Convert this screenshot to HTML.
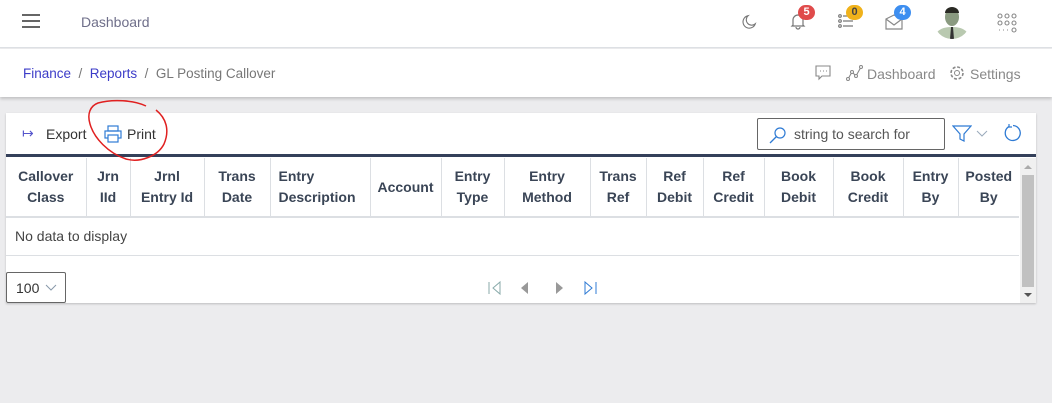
<!DOCTYPE html>
<html><head><meta charset="utf-8"><style>
*{box-sizing:border-box;margin:0;padding:0}
body{width:1052px;height:403px;background:#ececee;font-family:"Liberation Sans",sans-serif;position:relative;overflow:hidden;color:#333}
.a{position:absolute}
.top{left:0;top:0;width:1052px;height:48px;background:#fff;border-bottom:1px solid #dde0e4}
.bc{left:0;top:49px;width:1052px;height:48px;background:#fff;box-shadow:0 2px 3px rgba(0,0,0,.18)}
.card{left:6px;top:113px;width:1030px;height:190px;background:#fff;box-shadow:0 1px 2px rgba(0,0,0,.2)}
.badge{position:absolute;height:15px;min-width:17px;border-radius:8px;color:#fff;font-size:11px;font-weight:bold;text-align:center;line-height:15px}
th{font-size:14px;font-weight:bold;color:#3a4556;border-right:1px solid #dcdfe3;text-align:center;line-height:21px;vertical-align:middle;white-space:nowrap}
table{border-collapse:collapse;table-layout:fixed}
</style></head><body>
<div class="a top">
 <div class="a" style="left:22px;top:14px;width:18px;height:2px;background:#666;box-shadow:0 6px 0 #666,0 12px 0 #666"></div>
 <div class="a" style="left:81px;top:14px;font-size:14px;color:#6f6f8a">Dashboard</div>
 <svg class="a" style="left:740px;top:13px" width="18" height="18" viewBox="0 0 20 20"><path d="M9 3a7 7 0 1 0 8 9 6 6 0 0 1-8-9z" fill="none" stroke="#777" stroke-width="1.2"/></svg>
 <svg class="a" style="left:789px;top:12px" width="18" height="18" viewBox="0 0 18 18"><path d="M4 13V8a5 5 0 0 1 10 0v5l1 1H3zM7 15a2 2 0 0 0 4 0" fill="none" stroke="#777" stroke-width="1.2"/></svg>
 <div class="badge" style="left:798px;top:5px;background:#e04b4b">5</div>
 <svg class="a" style="left:838px;top:13px" width="16" height="16" viewBox="0 0 16 16"><g fill="none" stroke="#777" stroke-width="1.2"><circle cx="2" cy="3" r="1.3"/><circle cx="2" cy="8" r="1.3"/><circle cx="2" cy="13" r="1.3"/><path d="M5 3h10M5 8h10M5 13h10"/></g></svg>
 <div class="badge" style="left:846px;top:5px;background:#f0b21b;color:#444">0</div>
 <svg class="a" style="left:885px;top:14px" width="18" height="16" viewBox="0 0 18 16"><path d="M1 5l8-4 8 4v10H1zM1 5l8 6 8-6" fill="none" stroke="#888" stroke-width="1.2"/></svg>
 <div class="badge" style="left:894px;top:5px;background:#3d8ef0">4</div>
 <svg class="a" style="left:934px;top:3px" width="36" height="36" viewBox="0 0 36 36"><defs><clipPath id="c"><circle cx="18" cy="18" r="18"/></clipPath></defs><g clip-path="url(#c)"><rect width="36" height="36" fill="#fff"/><path d="M0 36C2 26 10 24 18 24S34 26 36 36z" fill="#b9c9b0"/><ellipse cx="18" cy="14" rx="7" ry="9" fill="#8a9a80"/><path d="M11 10a7 6 0 0 1 14 0z" fill="#2a2a24"/><path d="M17 24h2l1 12h-4z" fill="#333"/></g></svg>
 <svg class="a" style="left:997px;top:13px" width="20" height="20" viewBox="0 0 20 20"><g fill="none" stroke="#888" stroke-width="1.1"><circle cx="3" cy="3" r="2"/><circle cx="10" cy="3" r="2"/><circle cx="17" cy="3" r="2"/><circle cx="3" cy="10" r="2"/><circle cx="10" cy="10" r="2"/><circle cx="17" cy="10" r="2"/><circle cx="17" cy="17" r="2"/></g><path d="M2 17h1M6 17h1M10 17h1" stroke="#888"/></svg>
</div>
<div class="a bc">
 <div class="a" style="left:23px;top:17px;font-size:13.5px;color:#777"><span style="color:#3c3cc8">Finance</span> &nbsp;/&nbsp; <span style="color:#3c3cc8">Reports</span> &nbsp;/&nbsp; GL Posting Callover</div>
 <svg class="a" style="left:815px;top:16px" width="16" height="16" viewBox="0 0 16 16"><path d="M1 1h14v10H7l-3 3v-3H1z" fill="none" stroke="#888" stroke-width="1.1"/><path d="M5 6h1M8 6h1M11 6h1" stroke="#888"/></svg>
 <svg class="a" style="left:846px;top:16px" width="17" height="16" viewBox="0 0 17 16"><path d="M2 14l4-7 4 4 5-9" fill="none" stroke="#888" stroke-width="1.1"/><circle cx="2" cy="14" r="1.5" fill="#fff" stroke="#888"/><circle cx="6" cy="7" r="1.5" fill="#fff" stroke="#888"/><circle cx="10" cy="11" r="1.5" fill="#fff" stroke="#888"/><circle cx="15" cy="2" r="1.5" fill="#fff" stroke="#888"/></svg>
 <div class="a" style="left:867px;top:17px;font-size:14px;color:#888">Dashboard</div>
 <svg class="a" style="left:949px;top:16px" width="16" height="16" viewBox="0 0 16 16"><circle cx="8" cy="8" r="2.5" fill="none" stroke="#888"/><circle cx="8" cy="8" r="6" fill="none" stroke="#888" stroke-width="1.6" stroke-dasharray="3 1.7"/></svg>
 <div class="a" style="left:970px;top:17px;font-size:14px;color:#888">Settings</div>
</div>
<div class="a card">
 <div class="a" style="left:16px;top:12px;font-size:14px;color:#5555cc">&#x21A6;</div>
 <div class="a" style="left:40px;top:13px;font-size:14px;color:#333">Export</div>
 <svg class="a" style="left:98px;top:12px" width="18" height="18" viewBox="0 0 18 18"><g fill="none" stroke="#2f7bd4" stroke-width="1.2"><rect x="4" y="1" width="10" height="5"/><rect x="1" y="6" width="16" height="7"/><rect x="4" y="10" width="10" height="7" fill="#fff"/></g></svg>
 <div class="a" style="left:121px;top:13px;font-size:14px;color:#333">Print</div>
 <div class="a" style="left:751px;top:5px;width:188px;height:32px;border:1px solid #666;border-radius:2px"></div>
 <svg class="a" style="left:763px;top:13px" width="18" height="18" viewBox="0 0 18 18"><circle cx="11" cy="7" r="5" fill="none" stroke="#2f7bd4" stroke-width="1.2"/><path d="M7.5 10.5L1 17" stroke="#2f7bd4" stroke-width="1.3"/></svg>
 <div class="a" style="left:788px;top:13px;font-size:14px;color:#555">string to search for</div>
 <svg class="a" style="left:946px;top:12px" width="20" height="18" viewBox="0 0 20 18"><path d="M1 1h18l-7 8v7l-4-2V9z" fill="none" stroke="#2f7bd4" stroke-width="1.2"/></svg>
 <svg class="a" style="left:970px;top:17px" width="12" height="8" viewBox="0 0 12 8"><path d="M1 1l5 5 5-5" fill="none" stroke="#9aaabb"/></svg>
 <svg class="a" style="left:997px;top:10px" width="20" height="20" viewBox="0 0 20 20"><path d="M6 3.5A7.5 7.5 0 1 0 10 2.5" fill="none" stroke="#2f7bd4" stroke-width="1.3"/><path d="M6 1v3h3" fill="none" stroke="#2f7bd4" stroke-width="1.2"/></svg>
 <div class="a" style="left:0;top:41px;width:1030px;height:3px;background:#34405a"></div>
 <table class="a" style="left:0;top:45px;width:1013px">
  <colgroup><col style="width:80px"><col style="width:44px"><col style="width:74px"><col style="width:66px"><col style="width:100px"><col style="width:71px"><col style="width:63px"><col style="width:86px"><col style="width:56px"><col style="width:57px"><col style="width:61px"><col style="width:69px"><col style="width:70px"><col style="width:55px"><col style="width:61px"></colgroup>
  <tr style="height:59px;border-bottom:2px solid #dcdfe3"><th>Callover<br>Class</th><th>Jrn<br>IId</th><th>Jrnl<br>Entry Id</th><th>Trans<br>Date</th><th style="text-align:left;padding-left:8px">Entry<br>Description</th><th>Account</th><th>Entry<br>Type</th><th>Entry<br>Method</th><th>Trans<br>Ref</th><th>Ref<br>Debit</th><th>Ref<br>Credit</th><th>Book<br>Debit</th><th>Book<br>Credit</th><th>Entry<br>By</th><th style="border-right:none">Posted<br>By</th></tr>
  <tr style="height:38px;border-bottom:1px solid #dcdfe3"><td colspan="15" style="font-size:14px;color:#444;padding-left:9px">No data to display</td></tr>
 </table>
 <div class="a" style="left:1014px;top:45px;width:16px;height:145px;background:#f0f0f0"></div>
 <div class="a" style="left:1016px;top:62px;width:12px;height:112px;background:#c1c1c1"></div>
 <div class="a" style="left:1018px;top:52px;border:4px solid transparent;border-bottom:4px solid #aaa;border-top:none"></div>
 <div class="a" style="left:1018px;top:180px;border:4px solid transparent;border-top:4px solid #555;border-bottom:none"></div>
 <div class="a" style="left:0;top:159px;width:60px;height:31px;border:1px solid #666;border-radius:2px;font-size:14px;color:#333;padding:7px 0 0 9px">100</div>
 <svg class="a" style="left:39px;top:171px" width="12" height="8" viewBox="0 0 12 8"><path d="M1 1l5 5 5-5" fill="none" stroke="#8899aa"/></svg>
 <svg class="a" style="left:480px;top:167px" width="120" height="16" viewBox="0 0 120 16"><g fill="none" stroke="#8aa"><path d="M3 2v12M14 2L7 8l7 6z"/></g><path d="M42 2L35 8l7 6z" fill="#999"/><path d="M70 2l7 6-7 6z" fill="#999"/><g fill="none" stroke="#2f7bd4"><path d="M99 2l7 6-7 6zM110 2v12"/></g></svg>
</div>
<svg class="a" style="left:84px;top:98px" width="90" height="70" viewBox="0 0 90 70"><path d="M62 8C50 2 28 1 14 5 6 8 3 16 6 26 10 40 24 55 42 61 56 65 74 58 80 46 86 32 82 20 72 12" fill="none" stroke="#e02020" stroke-width="1.5"/></svg>
</body></html>
